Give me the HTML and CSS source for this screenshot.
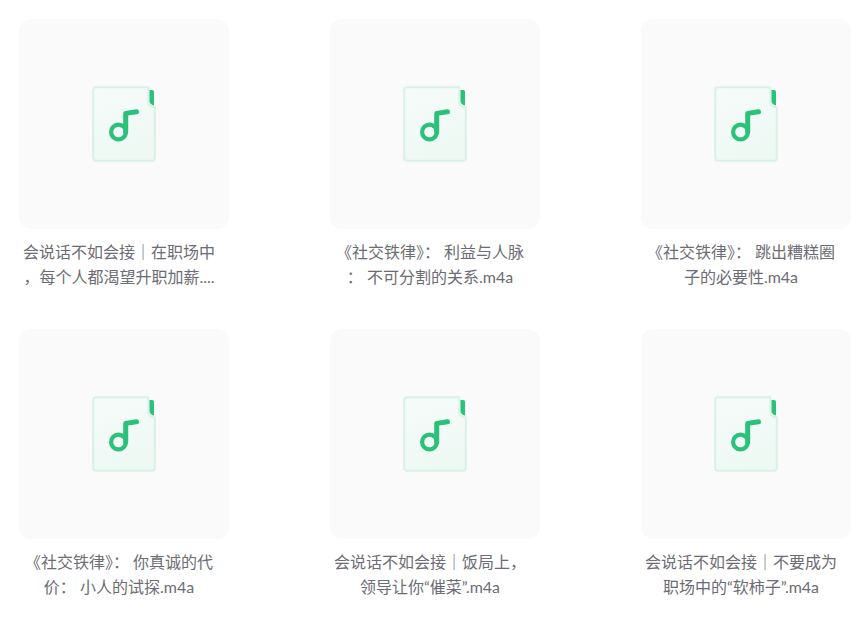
FILE: index.html
```html
<!DOCTYPE html>
<html lang="zh-CN">
<head>
<meta charset="utf-8">
<title>音频文件</title>
<link rel="stylesheet" href="styles.css">
</head>
<body>
<svg class="defs" width="0" height="0" aria-hidden="true">
  <defs>
    <linearGradient id="paper" x1="0" y1="0" x2="0.3" y2="1">
      <stop offset="0" stop-color="#f6fbf9"/>
      <stop offset="1" stop-color="#eef9f4"/>
    </linearGradient>
    <symbol id="audio" viewBox="0 0 64 76">
      <path d="M4 1.200H56.400V16C56.400 19 58.500 21 62.800 21.500V72C62.800 73.600 61.600 74.800 60 74.800H4C2.400 74.800 1.200 73.600 1.200 72V4C1.200 2.400 2.400 1.200 4 1.200Z" fill="url(#paper)" stroke="#d9f1e7" stroke-width="2"/>
      <path d="M57.500 4H60C61.200 4 62 4.800 62 6V19.500C59.500 19.200 57.500 17.500 57.500 15Z" fill="#2bc17b"/>
      <circle cx="26.500" cy="46" r="7.400" fill="none" stroke="#2bc17b" stroke-width="4.200"/>
      <path d="M33.700 46V27.400L44.500 25.800" fill="none" stroke="#2bc17b" stroke-width="5" stroke-linecap="round" stroke-linejoin="round"/>
    </symbol>
  </defs>
</svg>
<main class="grid">
  <article class="item">
    <div class="tile"><svg class="icon"><use href="#audio"/></svg></div>
    <p class="name">会说话不如会接｜在职场中，每个人都渴望升职加薪....</p>
  </article>
  <article class="item">
    <div class="tile"><svg class="icon"><use href="#audio"/></svg></div>
    <p class="name">《社交铁律》： 利益与人脉： 不可分割的关系.m4a</p>
  </article>
  <article class="item">
    <div class="tile"><svg class="icon"><use href="#audio"/></svg></div>
    <p class="name">《社交铁律》： 跳出糟糕圈子的必要性.m4a</p>
  </article>
  <article class="item">
    <div class="tile"><svg class="icon"><use href="#audio"/></svg></div>
    <p class="name">《社交铁律》： 你真诚的代价： 小人的试探.m4a</p>
  </article>
  <article class="item">
    <div class="tile"><svg class="icon"><use href="#audio"/></svg></div>
    <p class="name">会说话不如会接｜饭局上，领导让你“催菜”.m4a</p>
  </article>
  <article class="item">
    <div class="tile"><svg class="icon"><use href="#audio"/></svg></div>
    <p class="name">会说话不如会接｜不要成为职场中的“软柿子”.m4a</p>
  </article>
</main>
</body>
</html>
```
FILE: styles.css
```css
html, body {
  margin: 0;
  padding: 0;
  background: #fff;
}
.defs {
  display: block;
  height: 0;
}
.grid {
  display: grid;
  grid-template-columns: repeat(3, 210px);
  column-gap: 101px;
  row-gap: 40px;
  padding: 19px 0 0 19px;
}
.item {
  width: 210px;
}
.tile {
  width: 210px;
  height: 210px;
  border-radius: 12px;
  background: #fafafa;
  display: flex;
  align-items: center;
  justify-content: center;
}
.icon {
  width: 64px;
  height: 76px;
}
.name {
  margin: 11px 0 0;
  width: 200px;
  height: 49px;
  font: 16px/24.500px Lato, "Noto Sans CJK SC", sans-serif;
  color: #6c6c74;
  text-align: center;
  line-break: anywhere;
  word-break: break-all;
}
```
